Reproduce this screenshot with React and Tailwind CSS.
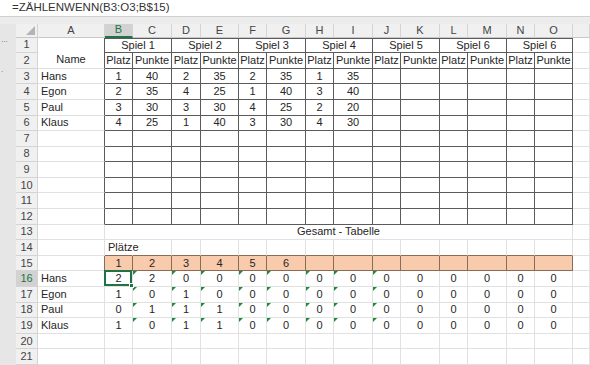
import React from 'react';

const letters = ['A', 'B', 'C', 'D', 'E', 'F', 'G', 'H', 'I', 'J', 'K', 'L', 'M', 'N', 'O', ''];

const topRows = {
  3: ['Hans', 1, 40, 2, 35, 2, 35, 1, 35],
  4: ['Egon', 2, 35, 4, 25, 1, 40, 3, 40],
  5: ['Paul', 3, 30, 3, 30, 4, 25, 2, 20],
  6: ['Klaus', 4, 25, 1, 40, 3, 30, 4, 30],
};

const bottomRows = {
  16: ['Hans', 2, 2, 0, 0, 0, 0, 0, 0, 0, 0, 0, 0, 0, 0],
  17: ['Egon', 1, 0, 1, 0, 0, 0, 0, 0, 0, 0, 0, 0, 0, 0],
  18: ['Paul', 0, 1, 1, 1, 0, 0, 0, 0, 0, 0, 0, 0, 0, 0],
  19: ['Klaus', 1, 0, 1, 1, 0, 0, 0, 0, 0, 0, 0, 0, 0, 0],
};

const spiele = ['Spiel 1', 'Spiel 2', 'Spiel 3', 'Spiel 4', 'Spiel 5', 'Spiel 6', 'Spiel 6'];

const R = {
  dark: 'border-r-[#5b5b5b]',
  light: 'border-r-[#e1e1e1]',
  orange: 'border-r-[#8b6b58]',
  none: 'border-r-transparent',
};
const B = {
  dark: 'border-b-[#5b5b5b]',
  light: 'border-b-[#e1e1e1]',
  orange: 'border-b-[#8b6b58]',
};

const Cell = ({ right, bottom, className = '', children }) => (
  <div className={`relative flex items-center border-r border-b ${right} ${bottom} ${className}`}>
    {children}
  </div>
);

// green error marker in the top-left corner
const Marker = () => (
  <div className="absolute left-0 top-0 w-0 h-0 border-t-[4px] border-t-[#1e8a3c] border-r-[4px] border-r-transparent" />
);

const rightColor = (r, c) => {
  if (c === 15) return R.light;
  if (r === 15) return R.orange;
  if (r >= 1 && r <= 12) return R.dark;
  if (r === 14 && c === 1) return R.none;
  return R.light;
};

const bottomColor = (r, c) => {
  if (c === 0 || c === 15) return B.light;
  if (r >= 1 && r <= 12) return B.dark;
  if (r === 14 || r === 15) return B.orange;
  return B.light;
};

const RowHeader = ({ r }) => (
  <div
    className={`flex items-center justify-center border-r border-b border-r-[#d4d4d4] border-b-[#d4d4d4] ${
      r === 16 ? 'bg-[#d2d2d2] text-[#217346]' : 'bg-[#f0f0f0] text-[#444]'
    }`}
  >
    {r}
  </div>
);

const renderRow = (r) => {
  const cells = [<RowHeader key="h" r={r} />];

  // column A
  if (r === 1) {
    cells.push(
      <Cell key="a" right={R.dark} bottom={B.light} className="row-span-2 justify-center items-end pb-[3px]">
        Name
      </Cell>
    );
  } else if (r !== 2) {
    const name = topRows[r]?.[0] || bottomRows[r]?.[0] || '';
    cells.push(
      <Cell key="a" right={rightColor(r, 0)} bottom={B.light} className="pl-[3px]">
        {name}
      </Cell>
    );
  }

  // columns B - O
  if (r === 1) {
    spiele.forEach((s, i) => {
      cells.push(
        <Cell key={'s' + i} right={R.dark} bottom={B.dark} className="col-span-2 justify-center border-t border-t-[#5b5b5b]">
          {s}
        </Cell>
      );
    });
  } else if (r === 13) {
    cells.push(
      <Cell key="g" right={R.light} bottom={B.light} className="col-span-14 justify-center">
        Gesamt - Tabelle
      </Cell>
    );
  } else {
    for (let c = 1; c <= 14; c++) {
      let content = '';
      let extra = 'justify-center';
      if (r === 2) content = c % 2 === 1 ? 'Platz' : 'Punkte';
      if (topRows[r] && c <= 8) content = topRows[r][c];
      if (bottomRows[r]) content = bottomRows[r][c];
      if (r === 14 && c === 1) {
        content = 'Plätze';
        extra = 'pl-[3px] whitespace-nowrap overflow-visible';
      }
      if (r === 15) {
        extra = 'justify-center bg-[#f8cbad]';
        if (c <= 6) content = c;
      }
      cells.push(
        <Cell key={'c' + c} right={rightColor(r, c)} bottom={bottomColor(r, c)} className={extra}>
          {bottomRows[r] && c >= 2 && c <= 9 && <Marker />}
          {r === 16 && c === 1 && (
            <div className="absolute -left-[1px] -top-[1px] right-0 bottom-0 border-2 border-[#217346] z-10">
              <div className="absolute -right-[4px] -bottom-[4px] w-[5px] h-[5px] bg-[#217346] border border-white" />
            </div>
          )}
          <span className="relative">{content}</span>
        </Cell>
      );
    }
  }

  // column P
  cells.push(<Cell key="p" right={R.light} bottom={B.light} />);
  return cells;
};

export default function App() {
  const rows = [];
  for (let r = 1; r <= 21; r++) rows.push(...renderRow(r));

  return (
    <div
      className="w-[590px] h-[365px] overflow-hidden bg-[#e6e6e6] flex flex-col text-[11px] text-[#262626]"
      style={{ fontFamily: '"Liberation Sans", Arial, sans-serif' }}
    >
      {/* formula bar */}
      <div className="h-[17px] bg-white border-b border-[#d0d0d0] flex items-center pl-[12px] text-[11.5px] text-[#333]">
        =ZÄHLENWENN(B3:O3;B$15)
      </div>
      <div className="h-[10px] bg-[#ececec]" />

      <div className="flex flex-1">
        {/* left strip */}
        <div className="w-[16px] bg-[#e6e6e6] flex flex-col items-start pl-[1px] text-[#6a6a6a] text-[8px] leading-none">
          <span className="mt-[12px]">...</span>
          <span className="mt-[22px]">.</span>
        </div>

        <div className="grid grid-cols-[22px_67px_28px_39px_29px_38px_28px_39px_28px_39px_28px_39px_28px_39px_28px_38px_17px] grid-rows-[14px_repeat(21,15.6px)] bg-white leading-none">
          {/* column headers */}
          <div className="relative bg-[#f0f0f0] border-r border-b border-r-[#d4d4d4] border-b-[#c8c8c8]">
            <div className="absolute right-[2px] bottom-[2px] w-0 h-0 border-b-[9px] border-b-[#b4b4b4] border-l-[9px] border-l-transparent" />
          </div>
          {letters.map((l, i) => (
            <div
              key={'h' + i}
              className={`flex items-center justify-center border-r border-r-[#d4d4d4] text-[11px] ${
                l === 'B'
                  ? 'bg-[#d2d2d2] text-[#217346] border-b-2 border-b-[#217346]'
                  : 'bg-[#f0f0f0] text-[#444] border-b border-b-[#c8c8c8]'
              }`}
            >
              {l}
            </div>
          ))}
          {rows}
        </div>
      </div>
    </div>
  );
}
